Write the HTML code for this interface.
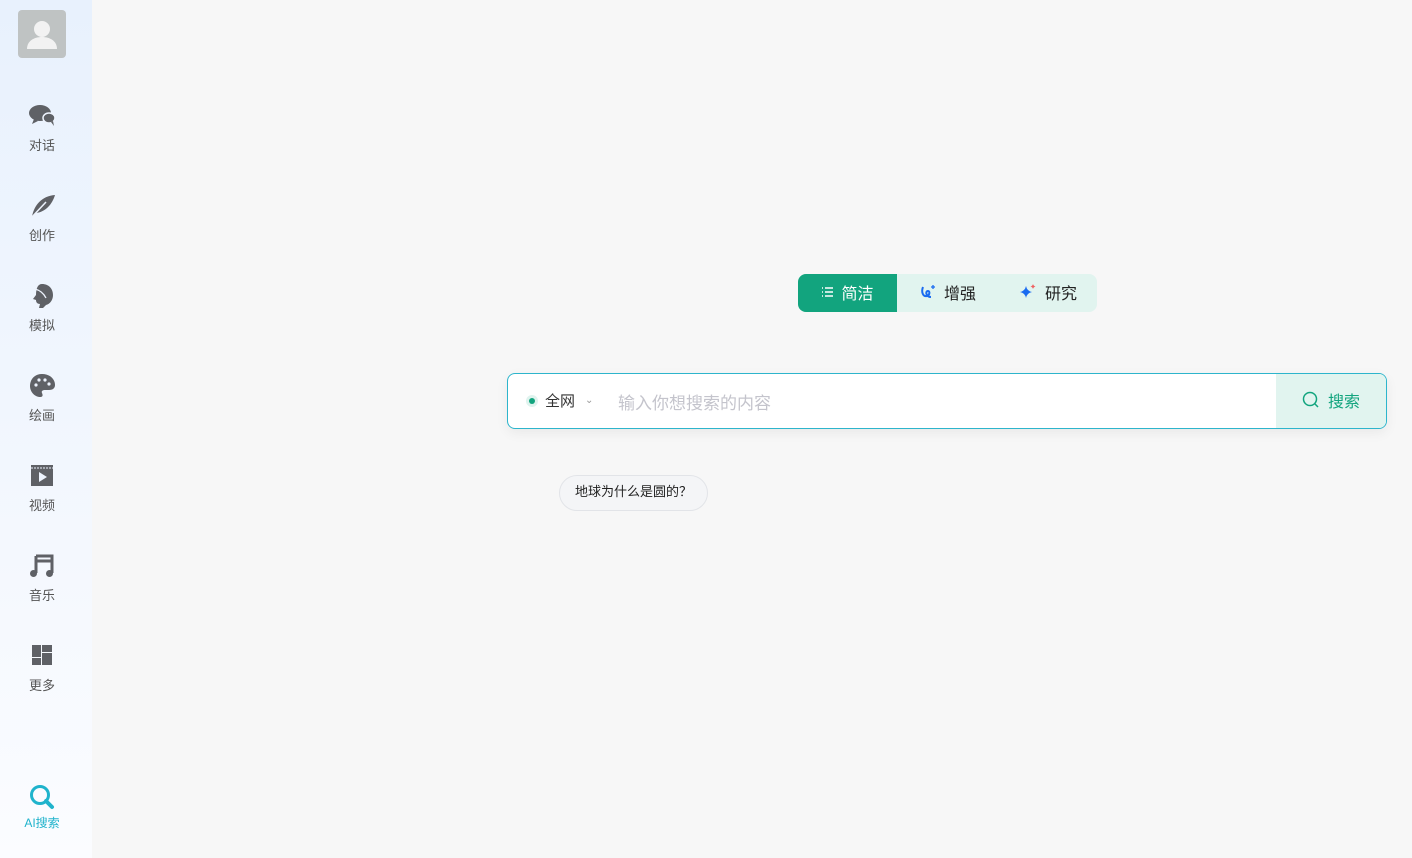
<!DOCTYPE html>
<html><head><meta charset="utf-8"><style>
*{margin:0;padding:0;box-sizing:border-box}
body{width:1412px;height:858px;background:#f7f7f7;font-family:"Liberation Sans","Noto Sans CJK SC",sans-serif;position:relative;overflow:hidden}
.side{position:absolute;left:0;top:0;width:92px;height:858px;background:linear-gradient(#e8f1fd,#fbfcff)}
.av{position:absolute;left:18px;top:10px;width:48px;height:48px;border-radius:4px;background:#bfc3c3}
.it{position:absolute;left:0;width:84px;text-align:center;font-size:13px;color:#555}
.it svg{display:block;margin:0 auto 6px}
.tabs{position:absolute;left:798px;top:274px;width:299px;height:38px;border-radius:8px;background:#e1f4ef;display:flex;font-size:16px;color:#222}
.tab{display:flex;align-items:center;justify-content:center;gap:8px;padding-bottom:3px}
.tab.on{background:#12a47e;color:#fff;border-radius:8px 0 0 8px;width:99px}
.box{position:absolute;left:507px;top:373px;width:880px;height:56px;border:1px solid #2db5cc;border-radius:8px;background:#fff;box-shadow:0 4px 12px rgba(0,0,0,.06);overflow:hidden}
.btn{position:absolute;right:0;top:0;width:110px;height:54px;background:#e1f4ef;color:#12a47e;font-size:16px;display:flex;align-items:center;justify-content:center;gap:8px;padding-bottom:3px}
.chip{position:absolute;left:559px;top:475px;width:149px;height:36px;border:1px solid #e2e4e8;border-radius:18px;background:#f4f5f7;font-size:13px;color:#222;text-align:center;line-height:32px}
</style></head><body>
<div class="side">
<div class="av"><svg width="48" height="48"><circle cx="24" cy="19" r="8" fill="#f2f2f2"/><path d="M9 39c0-8 7-12 15-12s15 4 15 12z" fill="#f2f2f2"/></svg></div>
<div class="it" style="top:103px"><svg width="28" height="26" viewBox="0 0 28 26"><ellipse cx="12" cy="10" rx="11" ry="8" fill="#5f6166"/><path d="M6 16l-2 5 6-3z" fill="#5f6166"/><ellipse cx="21" cy="15" rx="6" ry="5" fill="#5f6166" stroke="#edf3fd" stroke-width="1.5"/><path d="M23 19l3 4-1-5z" fill="#5f6166"/></svg>对话</div>
<div class="it" style="top:193px"><svg width="28" height="26" viewBox="0 0 28 26"><path d="M4 24C6 12 14 3 27 2c-3 10-10 17-19 18z" fill="#5f6166"/><path d="M3 25L18 9" stroke="#edf3fd" stroke-width="1.5"/></svg>创作</div>
<div class="it" style="top:283px"><svg width="28" height="26" viewBox="0 0 28 26"><path d="M14 1c7 0 11 5 11 11 0 5-3 9-7 10l-3 3h-4l1-4c-3 0-4-2-4-4l-3-1 3-4c0-7 2-11 6-11z" fill="#5f6166"/><path d="M7 6c4 1 8 3 11 9" stroke="#edf3fd" stroke-width="1.3" fill="none"/></svg>模拟</div>
<div class="it" style="top:373px"><svg width="28" height="26" viewBox="0 0 28 26"><path d="M14 1C6 1 2 7 2 13c0 6 5 11 10 11 3 0 3-2 2-4-1-2 1-3 3-3h4c4 0 6-2 6-5 0-6-5-11-13-11z" fill="#5f6166"/><circle cx="8" cy="12" r="1.6" fill="#edf3fd"/><circle cx="11" cy="7" r="1.6" fill="#edf3fd"/><circle cx="17" cy="7" r="1.6" fill="#edf3fd"/><circle cx="21" cy="11" r="1.6" fill="#edf3fd"/></svg>绘画</div>
<div class="it" style="top:463px"><svg width="28" height="26" viewBox="0 0 28 26"><rect x="3" y="2" width="22" height="21" fill="#5f6166"/><path d="M3 5h22" stroke="#edf3fd" stroke-width="1" stroke-dasharray="2 1"/><path d="M11 9v10l8-5z" fill="#edf3fd"/></svg>视频</div>
<div class="it" style="top:553px"><svg width="28" height="26" viewBox="0 0 28 26"><path d="M8 3h16v17M8 3v17M8 3v5h16" stroke="#5f6166" stroke-width="3" fill="none"/><circle cx="5.5" cy="20.5" r="3.5" fill="#5f6166"/><circle cx="21.5" cy="20.5" r="3.5" fill="#5f6166"/></svg>音乐</div>
<div class="it" style="top:643px"><svg width="28" height="26" viewBox="0 0 28 26"><rect x="4" y="2" width="9" height="12" fill="#5f6166"/><rect x="4" y="15" width="9" height="7" fill="#5f6166"/><rect x="14" y="2" width="10" height="7" fill="#5f6166"/><rect x="14" y="10" width="10" height="12" fill="#5f6166"/></svg>更多</div>
<div class="it" style="top:783px;color:#1fb3cc;font-size:12px"><svg width="28" height="28" viewBox="0 0 28 28" style="margin-bottom:3px"><circle cx="12" cy="12" r="8.5" stroke="#1fb3cc" stroke-width="3" fill="none"/><path d="M18 18l6 6" stroke="#1fb3cc" stroke-width="4" stroke-linecap="round"/></svg>AI搜索</div>
</div>
<div class="tabs">
<div class="tab on"><svg width="12" height="12"><path d="M1 2h1M4 2h8M1 6h1M4 6h8M1 10h1M4 10h8" stroke="#fff" stroke-width="1.5"/></svg>简洁</div>
<div class="tab" style="width:102px"><svg width="16" height="16" viewBox="0 0 16 16"><path d="M3 3c-2 5 0 10 4 9 3-1 3-5 1-5-3 0-2 6 3 6" stroke="#1a6bf0" stroke-width="2" fill="none"/><path d="M13 1v4M11 3h4" stroke="#1a6bf0" stroke-width="1.3"/></svg>增强</div>
<div class="tab" style="width:98px"><svg width="18" height="16" viewBox="0 0 18 16"><path d="M7 2q1 5 6 6q-5 1-6 6q-1-5-6-6q5-1 6-6z" fill="#1a6bf0"/><path d="M14 0q.5 2 2.5 2.5q-2 .5-2.5 2.5q-.5-2-2.5-2.5q2-.5 2.5-2.5z" fill="#f06060"/></svg>研究</div>
</div>
<div class="box">
<div style="position:absolute;left:18px;top:16px;display:flex;align-items:center;font-size:15px;color:#333"><span style="width:12px;height:12px;border-radius:50%;background:#dff3ee;display:inline-flex;align-items:center;justify-content:center;margin-right:7px"><span style="width:6px;height:6px;border-radius:50%;background:#12a47e"></span></span>全网<span style="margin-left:10px;color:#999;font-size:10px">⌄</span></div>
<div style="position:absolute;left:110px;top:15px;font-size:17px;color:#c4c4cc">输入你想搜索的内容</div>
<div class="btn"><svg width="18" height="18" viewBox="0 0 18 18"><circle cx="8" cy="8" r="6.5" stroke="#12a47e" stroke-width="1.5" fill="none"/><path d="M13 13l3 3" stroke="#12a47e" stroke-width="1.5"/></svg>搜索</div>
</div>
<div class="chip">地球为什么是圆的？</div>
</body></html>
